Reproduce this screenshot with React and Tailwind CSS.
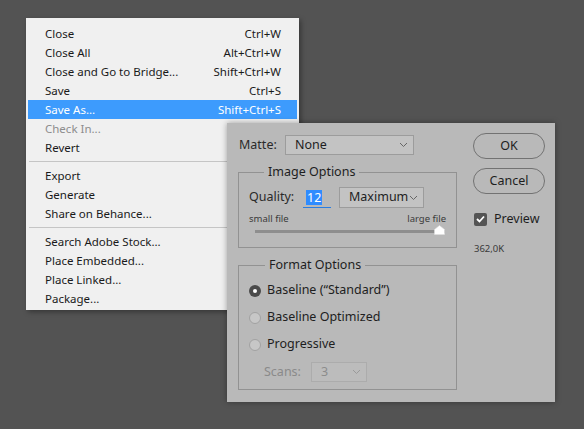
import React from 'react';

const font = { fontFamily: '"Noto Sans", "Open Sans", sans-serif' };

const menuGroups = [
  [
    { label: 'Close', key: 'Ctrl+W' },
    { label: 'Close All', key: 'Alt+Ctrl+W' },
    { label: 'Close and Go to Bridge...', key: 'Shift+Ctrl+W' },
    { label: 'Save', key: 'Ctrl+S' },
    { label: 'Save As...', key: 'Shift+Ctrl+S', active: true },
    { label: 'Check In...', disabled: true },
    { label: 'Revert' }
  ],
  [{ label: 'Export' }, { label: 'Generate' }, { label: 'Share on Behance...' }],
  [
    { label: 'Search Adobe Stock...' },
    { label: 'Place Embedded...' },
    { label: 'Place Linked...' },
    { label: 'Package...' }
  ]
];

function Chevron({ className = '' }) {
  return (
    <svg width="9" height="6" viewBox="0 0 9 6" className={className}>
      <polyline points="1,1 4.5,4.5 8,1" fill="none" stroke="currentColor" strokeWidth="1" />
    </svg>
  );
}

function Select({ value, className = '', disabled }) {
  return (
    <div
      className={`flex items-center justify-between h-[20px] border pl-[9px] pr-[5px] ${
        disabled ? 'border-[#acacac] bg-[#bcbcbc] text-[#8c8c8c]' : 'border-[#9c9c9c] bg-[#c3c3c3] text-[#1e1e1e]'
      } ${className}`}
    >
      <span className="text-[12.5px] leading-none">{value}</span>
      <Chevron className={disabled ? 'text-[#9a9a9a]' : 'text-[#666]'} />
    </div>
  );
}

function Radio({ checked, label }) {
  return (
    <div className="flex items-center h-[27px]">
      {checked ? (
        <div className="w-[12px] h-[12px] rounded-full bg-[#4a4a4a] flex items-center justify-center">
          <div className="w-[4px] h-[4px] rounded-full bg-white" />
        </div>
      ) : (
        <div className="w-[12px] h-[12px] rounded-full bg-[#c7c7c7] border border-[#a2a2a2]" />
      )}
      <span className="ml-[6px] text-[12.5px] text-[#1e1e1e]">{label}</span>
    </div>
  );
}

function Menu() {
  return (
    <div
      className="absolute left-[26px] top-[18px] w-[273px] bg-[#f0f0f0] pt-[6px] pb-[2px] shadow-[2px_2px_5px_rgba(0,0,0,0.35)]"
      style={font}
    >
      {menuGroups.map((group, gi) => (
        <div key={gi}>
          {gi > 0 && (
            <div className="h-[9px] flex items-center pl-[3px]">
              <div className="h-px w-full bg-[#c5c5c5]" />
            </div>
          )}
          {group.map((item) => (
            <div
              key={item.label}
              className={`h-[19px] mx-[2px] pl-[17px] pr-[16px] flex items-center justify-between text-[11.5px] ${
                item.active ? 'bg-[#3d9bfd] text-white' : item.disabled ? 'text-[#8d8d8d]' : 'text-[#1a1a1a]'
              }`}
            >
              <span>{item.label}</span>
              {item.key && <span>{item.key}</span>}
            </div>
          ))}
        </div>
      ))}
    </div>
  );
}

function Dialog() {
  return (
    <div
      className="absolute left-[227px] top-[123px] w-[328px] h-[279px] bg-[#b9b9b9] flex shadow-[0_0_6px_rgba(0,0,0,0.35)]"
      style={font}
    >
      <div className="w-[230px] pl-[11px] pt-[12px] flex flex-col">
        <div className="flex items-center h-[20px]">
          <span className="text-[12.5px] text-[#2a2a2a] w-[47px] pl-px">Matte:</span>
          <Select value="None" className="w-[129px]" />
        </div>

        <fieldset className="mt-[9px] w-[219px] h-[84px] border border-[#929292] px-[10px]">
          <legend className="ml-[15px] px-[4px] text-[12.5px] leading-[16px] text-[#1e1e1e]">Image Options</legend>
          <div className="flex items-center mt-[7px] h-[21px]">
            <span className="text-[12.5px] text-[#2a2a2a] w-[54px]">Quality:</span>
            <div className="w-[28px] h-[21px] border-b border-[#2a7de0] flex items-center pl-[3px]">
              <span className="bg-[#2f8cff] text-white text-[12.5px] leading-[15px] px-px">12</span>
            </div>
            <Select value="Maximum" className="ml-[8px] w-[85px] h-[21px]" />
          </div>
          <div className="flex justify-between mt-[5px] text-[9.5px] leading-[12px] text-[#3a3a3a]">
            <span>small file</span>
            <span>large file</span>
          </div>
          <div className="relative h-[10px] ml-[6px] mr-[1px] mt-[2px]">
            <div className="absolute left-0 right-0 top-[3px] h-[3px] bg-[#8e8e8e]" />
            <svg className="absolute right-0 top-[-2px]" width="11" height="10" viewBox="0 0 11 10">
              <polygon points="5.5,0.5 10.5,4.5 10.5,9.5 0.5,9.5 0.5,4.5" fill="#ffffff" stroke="#e0e0e0" strokeWidth="0.5" />
            </svg>
          </div>
        </fieldset>

        <fieldset className="mt-[9px] w-[219px] h-[133px] border border-[#929292] pl-[10px]">
          <legend className="ml-[16px] px-[4px] text-[12.5px] leading-[16px] text-[#1e1e1e]">Format Options</legend>
          <div className="mt-[4px]">
            <Radio checked label={'Baseline (\u201CStandard\u201D)'} />
            <Radio label="Baseline Optimized" />
            <Radio label="Progressive" />
          </div>
          <div className="flex items-center mt-[4px] pl-[15px] h-[20px]">
            <span className="text-[12.5px] text-[#8a8a8a] w-[47px]">Scans:</span>
            <Select value="3" className="w-[56px]" disabled />
          </div>
        </fieldset>
      </div>

      <div className="pl-[16px] pt-[10px] flex flex-col">
        <button className="w-[72px] h-[26px] rounded-full border border-[#727272] text-[12.5px] text-[#1e1e1e]">OK</button>
        <button className="mt-[9px] w-[72px] h-[26px] rounded-full border border-[#727272] text-[12.5px] text-[#1e1e1e]">
          Cancel
        </button>
        <div className="flex items-center mt-[18px] pl-px h-[14px]">
          <div className="w-[13px] h-[13px] rounded-[2px] bg-[#545454] flex items-center justify-center">
            <svg width="9" height="8" viewBox="0 0 9 8">
              <polyline points="1,4 3.5,6.5 8,1.5" fill="none" stroke="#fff" strokeWidth="1.8" />
            </svg>
          </div>
          <span className="ml-[7px] text-[12.5px] text-[#1e1e1e]">Preview</span>
        </div>
        <div className="mt-[16px] pl-px text-[9.5px] text-[#3a3a3a]">362,0K</div>
      </div>
    </div>
  );
}

export default function App() {
  return (
    <div className="relative w-[584px] h-[429px] bg-[#535353] overflow-hidden">
      <Menu />
      <Dialog />
    </div>
  );
}
